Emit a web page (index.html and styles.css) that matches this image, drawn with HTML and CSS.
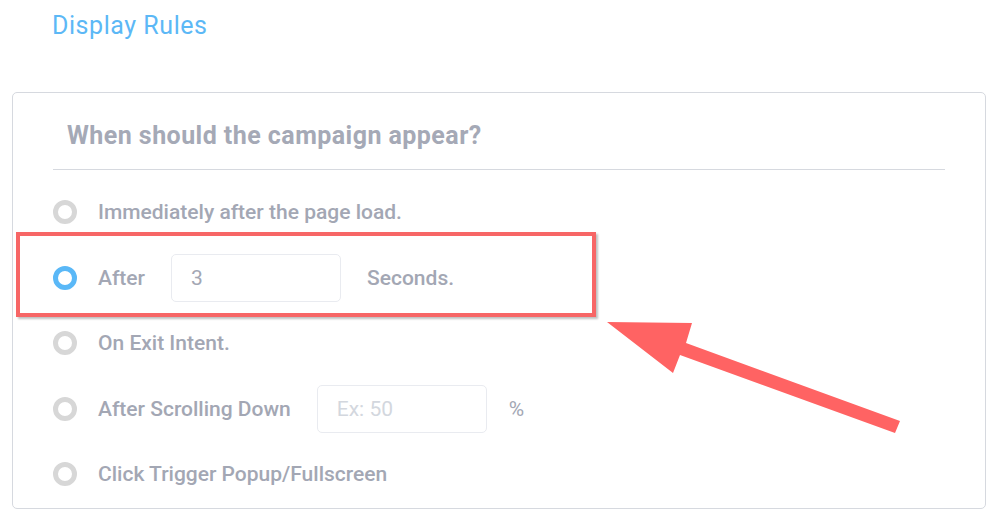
FILE: index.html
```html
<!DOCTYPE html>
<html>
<head>
<meta charset="utf-8">
<link rel="stylesheet" href="styles.css">
</head>
<body>
<div class="page">
  <h1 class="title">Display Rules</h1>
  <div class="card">
    <h2 class="card-heading">When should the campaign appear?</h2>
    <div class="options">
      <div class="option">
        <span class="radio"></span>
        <span class="label">Immediately after the page load.</span>
      </div>
      <div class="option">
        <span class="radio radio-on"></span>
        <span class="label">After</span>
        <span class="field field-after">3</span>
        <span class="label">Seconds.</span>
      </div>
      <div class="option">
        <span class="radio"></span>
        <span class="label">On Exit Intent.</span>
      </div>
      <div class="option">
        <span class="radio"></span>
        <span class="label">After Scrolling Down</span>
        <span class="field field-scroll placeholder">Ex: 50</span>
        <span class="label label-pct">%</span>
      </div>
      <div class="option">
        <span class="radio"></span>
        <span class="label">Click Trigger Popup/Fullscreen</span>
      </div>
    </div>
  </div>
  <div class="highlight"></div>
  <svg class="arrow" width="1000" height="531" viewBox="0 0 1000 531">
    <polygon points="607,322 692,323 686,343 900,421 895,433 680,355 673,373" fill="#ff6363"/>
  </svg>
</div>
</body>
</html>
```

FILE: styles.css
```css
* { box-sizing: border-box; }
html, body {
  margin: 0;
  padding: 0;
  background: #ffffff;
  font-family: Roboto, "Liberation Sans", sans-serif;
}
.page {
  position: relative;
  width: 1000px;
  height: 531px;
  overflow: hidden;
}
.title {
  margin: 0;
  padding: 11px 0 0 52px;
  height: 92px;
  font-size: 25px;
  line-height: 30px;
  font-weight: 400;
  color: #5cb8f6;
  letter-spacing: 0.55px;
}
.card {
  margin-left: 12px;
  width: 974px;
  height: 417px;
  border: 1px solid #d6d9df;
  border-radius: 5px;
  padding: 0 40px;
}
.card-heading {
  margin: 0;
  padding: 28px 0 18px 14px;
  font-size: 25px;
  line-height: 30px;
  font-weight: 700;
  color: #a5a9b6;
  border-bottom: 1px solid #d6d9df;
  letter-spacing: 0.45px;
}
.options {
  padding-top: 9.5px;
  display: flex;
  flex-direction: column;
}
.option {
  height: 65.5px;
  display: flex;
  align-items: center;
}
.radio {
  width: 24px;
  height: 24px;
  border: 5px solid #d7d7d7;
  border-radius: 50%;
  margin-right: 21px;
  flex: none;
}
.radio-on { border-color: #5ab8f7; }
.label {
  font-size: 21px;
  font-weight: 500;
  color: #a3a7b4;
}
.field {
  height: 48px;
  width: 170px;
  border: 1px solid #e9ebf0;
  border-radius: 5px;
  display: flex;
  align-items: center;
  padding-left: 19px;
  font-size: 21px;
  color: #a3a7b4;
}
.field-after { margin: 0 26px 0 26px; }
.field-scroll { margin: 0 22px 0 26px; }
.placeholder { color: #d3d7de; }
.label-pct { font-weight: 400; }
.highlight {
  position: absolute;
  left: 16px;
  top: 232px;
  width: 580px;
  height: 85px;
  border: 4px solid #f76666;
  box-shadow: 2px 2px 2px rgba(0, 0, 0, 0.25);
}
.arrow {
  position: absolute;
  left: 0;
  top: 0;
}
```
